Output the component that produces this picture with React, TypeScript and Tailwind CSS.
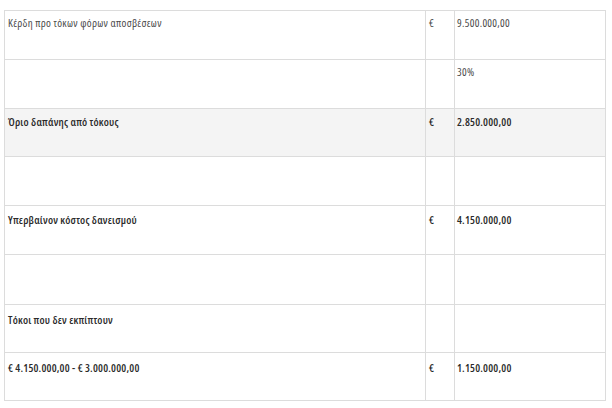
import React from "react";

type Row = { label: string; cur: string; val: string; bold?: boolean; bg?: boolean; h: string; pt: string };

const rows: Row[] = [
  { label: "Κέρδη προ τόκων φόρων αποσβέσεων", cur: "€", val: "9.500.000,00", h: "h-[49px]", pt: "pt-[4px]" },
  { label: "", cur: "", val: "30%", h: "h-[49px]", pt: "pt-[4px]" },
  { label: "Όριο δαπάνης από τόκους", cur: "€", val: "2.850.000,00", bold: true, bg: true, h: "h-[48px]", pt: "pt-[5px]" },
  { label: "", cur: "", val: "", h: "h-[49px]", pt: "pt-[5px]" },
  { label: "Υπερβαίνον κόστος δανεισμού", cur: "€", val: "4.150.000,00", bold: true, h: "h-[49px]", pt: "pt-[6px]" },
  { label: "", cur: "", val: "", h: "h-[50px]", pt: "pt-[6px]" },
  { label: "Τόκοι που δεν εκπίπτουν", cur: "", val: "", bold: true, h: "h-[48px]", pt: "pt-[7px]" },
  { label: "€ 4.150.000,00 - € 3.000.000,00", cur: "€", val: "1.150.000,00", bold: true, h: "h-[48px]", pt: "pt-[7px]" },
];

export default function App() {
  return (
    <div className="w-[612px] h-[408px] bg-white overflow-hidden pt-[10px] pl-[4px]" style={{ fontFamily: '"Open Sans", "Noto Sans", sans-serif' }}>
      <div className="w-[602px] border-l border-t border-[#dcdcdc]">
        {rows.map((r, i) => (
          <div
            key={i}
            className={`grid grid-cols-[421px_29px_151px] ${r.h} ${r.bg ? "bg-[#f4f4f4]" : "bg-white"} text-[11px] leading-[15px] font-stretch-[86%] ${r.bold ? "font-semibold tracking-[0.2px] text-[#2a2a2a]" : "font-normal tracking-[0.3px] text-[#4a4a4a]"}`}
          >
            <div className={`border-r border-b border-[#dcdcdc] px-[3px] ${r.pt} whitespace-nowrap`}>{r.label}</div>
            <div className={`border-r border-b border-[#dcdcdc] px-[3px] ${r.pt}`}>{r.cur}</div>
            <div className={`border-r border-b border-[#dcdcdc] px-[2px] ${r.pt}`}>{r.val}</div>
          </div>
        ))}
      </div>
    </div>
  );
}
